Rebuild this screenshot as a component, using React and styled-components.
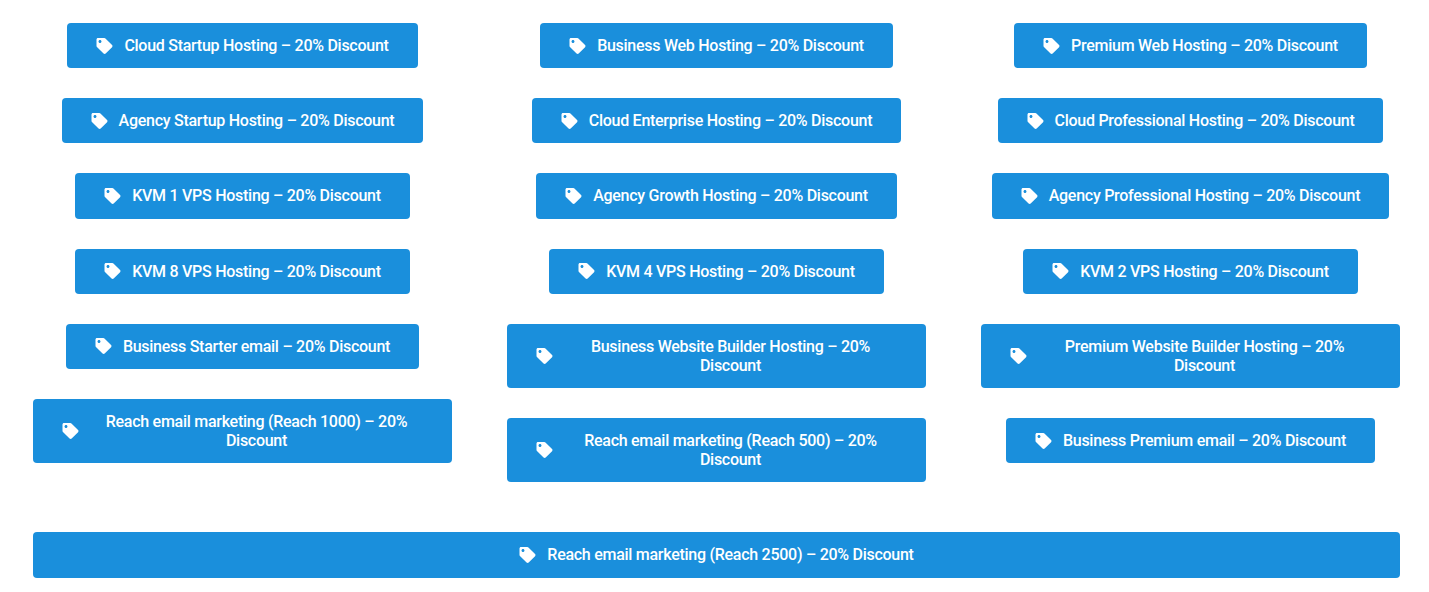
import React from 'react';
import styled, { createGlobalStyle } from 'styled-components';
import { FaTag } from 'react-icons/fa';

const columns = [
  [
    'Cloud Startup Hosting – 20% Discount',
    'Agency Startup Hosting – 20% Discount',
    'KVM 1 VPS Hosting – 20% Discount',
    'KVM 8 VPS Hosting – 20% Discount',
    'Business Starter email – 20% Discount',
    'Reach email marketing (Reach 1000) – 20% Discount',
  ],
  [
    'Business Web Hosting – 20% Discount',
    'Cloud Enterprise Hosting – 20% Discount',
    'Agency Growth Hosting – 20% Discount',
    'KVM 4 VPS Hosting – 20% Discount',
    'Business Website Builder Hosting – 20% Discount',
    'Reach email marketing (Reach 500) – 20% Discount',
  ],
  [
    'Premium Web Hosting – 20% Discount',
    'Cloud Professional Hosting – 20% Discount',
    'Agency Professional Hosting – 20% Discount',
    'KVM 2 VPS Hosting – 20% Discount',
    'Premium Website Builder Hosting – 20% Discount',
    'Business Premium email – 20% Discount',
  ],
];

const DealButton = ({ label, wide }) => (
  <Button href="#" $wide={wide}>
    <TagIcon />
    <Label>{label}</Label>
  </Button>
);

const App = () => (
  <Page>
    <GlobalStyle />
    <Columns>
      {columns.map((column) => (
        <Column key={column[0]}>
          {column.map((label) => (
            <DealButton key={label} label={label} />
          ))}
        </Column>
      ))}
    </Columns>
    <Footer>
      <DealButton wide label="Reach email marketing (Reach 2500) – 20% Discount" />
    </Footer>
  </Page>
);

const GlobalStyle = createGlobalStyle`
  body {
    margin: 0;
    background: #fff;
    font-family: 'Roboto', 'Liberation Sans', sans-serif;
  }
`;

const Page = styled.div`
  padding: 23.1px 29px 14px 33px;
`;

const Columns = styled.div`
  display: grid;
  grid-template-columns: repeat(3, 419px);
  column-gap: 55px;
`;

const Column = styled.div`
  display: flex;
  flex-direction: column;
  align-items: center;
  gap: 30px;
`;

const Footer = styled.div`
  margin-top: 50px;
`;

const Button = styled.a`
  display: ${(p) => (p.$wide ? 'flex' : 'inline-flex')};
  align-items: center;
  justify-content: center;
  box-sizing: border-box;
  max-width: 100%;
  padding: 13px 29px;
  border-radius: 4px;
  background: #1a8fdc;
  color: #fff;
  font-size: 16px;
  font-weight: 500;
  line-height: 19.15px;
  text-align: center;
  text-decoration: none;
`;

const TagIcon = styled(FaTag)`
  flex: none;
  width: 17px;
  height: 16px;
  margin-right: 11px;
`;

const Label = styled.span`
  letter-spacing: -0.27px;
`;

export default App;
